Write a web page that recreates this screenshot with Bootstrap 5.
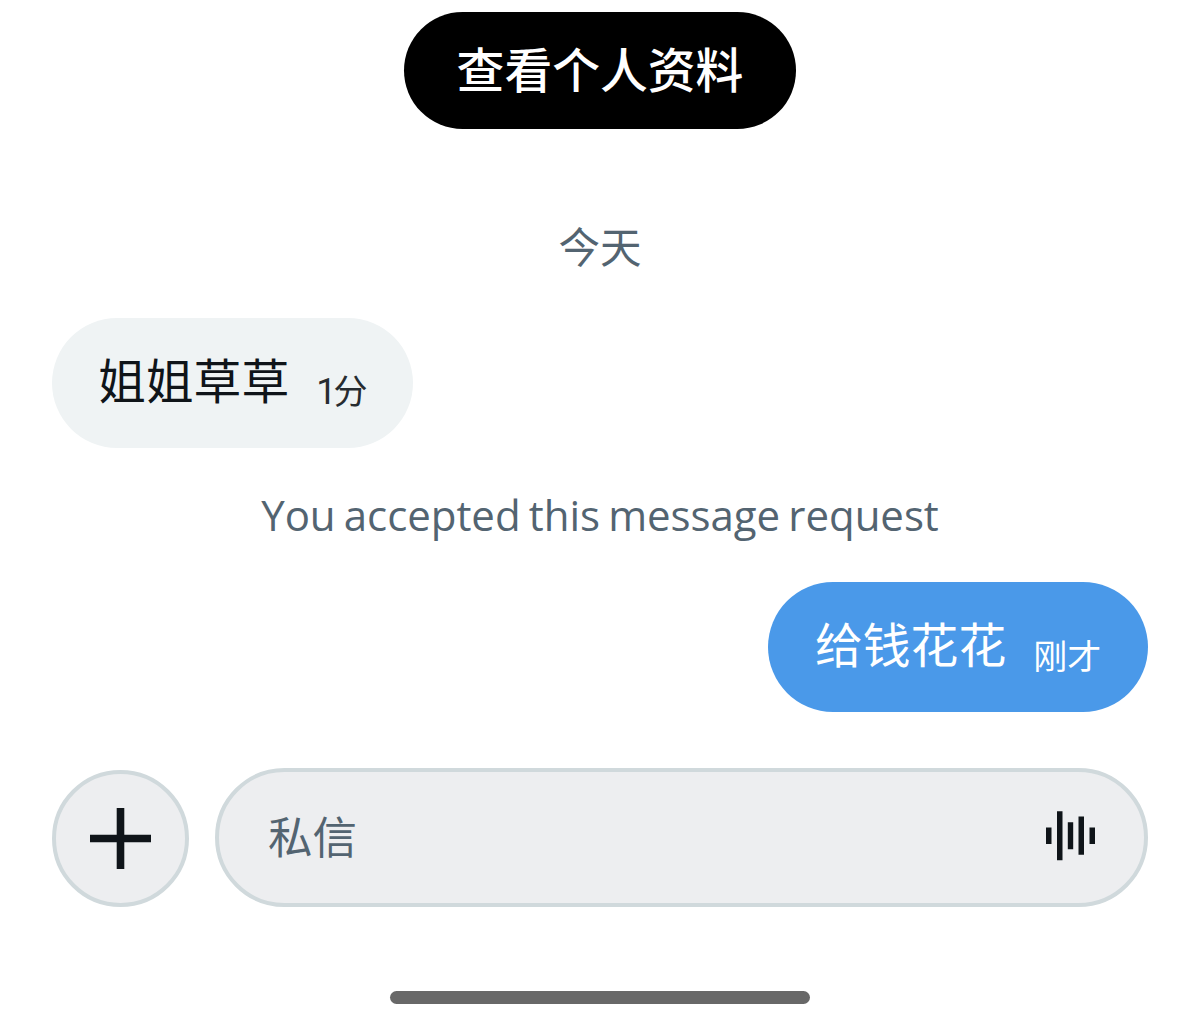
<!DOCTYPE html>
<html lang="zh-CN">
<head>
<meta charset="utf-8">
<meta name="viewport" content="width=device-width, initial-scale=1">
<title>私信</title>
<link href="https://cdn.jsdelivr.net/npm/bootstrap@5.3.0/dist/css/bootstrap.min.css" rel="stylesheet">
<style>
body{font-family:"Noto Sans CJK SC",sans-serif;color:#0f1419;height:1024px;overflow:hidden}
.chat-screen{height:1024px;padding:12px 52px 20px}
.profile-btn,.profile-btn:hover{width:392px;height:117px;background:#000;color:#fff;font-size:47.8px;font-weight:500;line-height:1;border:0;padding:0 0 5px}
.muted-line{color:#536471;line-height:60px}
.day-label{font-size:41.5px;margin-top:86px}
.bubble{height:130px;padding:0 47px 8px;font-size:47.8px;line-height:60px}
.bubble-in{background:#eff3f4;width:361px;margin-top:43px;padding-left:46px}
.bubble-out{background:#4a99e9;color:#fff;width:380px;margin-top:37px}
.stamp{font-size:34px;margin-left:27px;line-height:50px;padding-top:23px}
.stamp-in{color:#272c30}
.stamp-num{font-family:Roboto,sans-serif;font-size:36px;font-weight:400;letter-spacing:-3px}
.sys-note{font-family:"Open Sans",sans-serif;font-size:42px;font-weight:430;letter-spacing:-.05px;word-spacing:-2.6px;margin-top:37px}
.composer{margin-top:56px;gap:26px}
.add-btn{width:137px;height:137px;background:#edeef0;border:4px solid #d0d9dc}
.msg-field{height:139px;background:#edeef0;border:4px solid #d0d9dc;padding:0 48px 4px 49px;color:#536471;font-size:44.5px}
.home-bar{width:420px;height:13px;background:#686868}
</style>
<script src="https://cdn.jsdelivr.net/npm/bootstrap@5.3.0/dist/js/bootstrap.bundle.min.js"></script>
</head>
<body class="bg-white">
<main class="chat-screen d-flex flex-column">
<button class="btn profile-btn rounded-pill align-self-center">查看个人资料</button>
<div class="muted-line day-label text-center">今天</div>
<div class="bubble bubble-in rounded-pill d-flex align-items-center align-self-start text-nowrap"><span>姐姐草草</span><span class="stamp stamp-in"><span class="stamp-num">1</span>分</span></div>
<div class="muted-line sys-note text-center"><span>You accepted this message request</span></div>
<div class="bubble bubble-out rounded-pill d-flex align-items-center align-self-end text-nowrap"><span>给钱花花</span><span class="stamp">刚才</span></div>
<div class="composer d-flex align-items-end">
<button class="add-btn rounded-circle p-0 d-flex align-items-center justify-content-center" aria-label="添加"><svg width="61" height="61" viewBox="0 0 61 61"><path d="M0 30.5H61M30.5 0V61" stroke="#0f1419" stroke-width="7.6"/></svg></button>
<div class="msg-field flex-grow-1 rounded-pill d-flex align-items-center justify-content-between"><span>私信</span><svg width="50" height="50" viewBox="0 0 50 50" fill="#0f1419"><path d="M0 16.5h5.5v16.5H0zM11 .2h5.5v49H11zM21.8 11.2h5.4v27h-5.4zM32.5 5.5H38v38.3h-5.5zM43.5 16.5H49v16.5h-5.5z"/></svg></div>
</div>
<div class="home-bar rounded-pill align-self-center mt-auto"></div>
</main>
</body>
</html>
